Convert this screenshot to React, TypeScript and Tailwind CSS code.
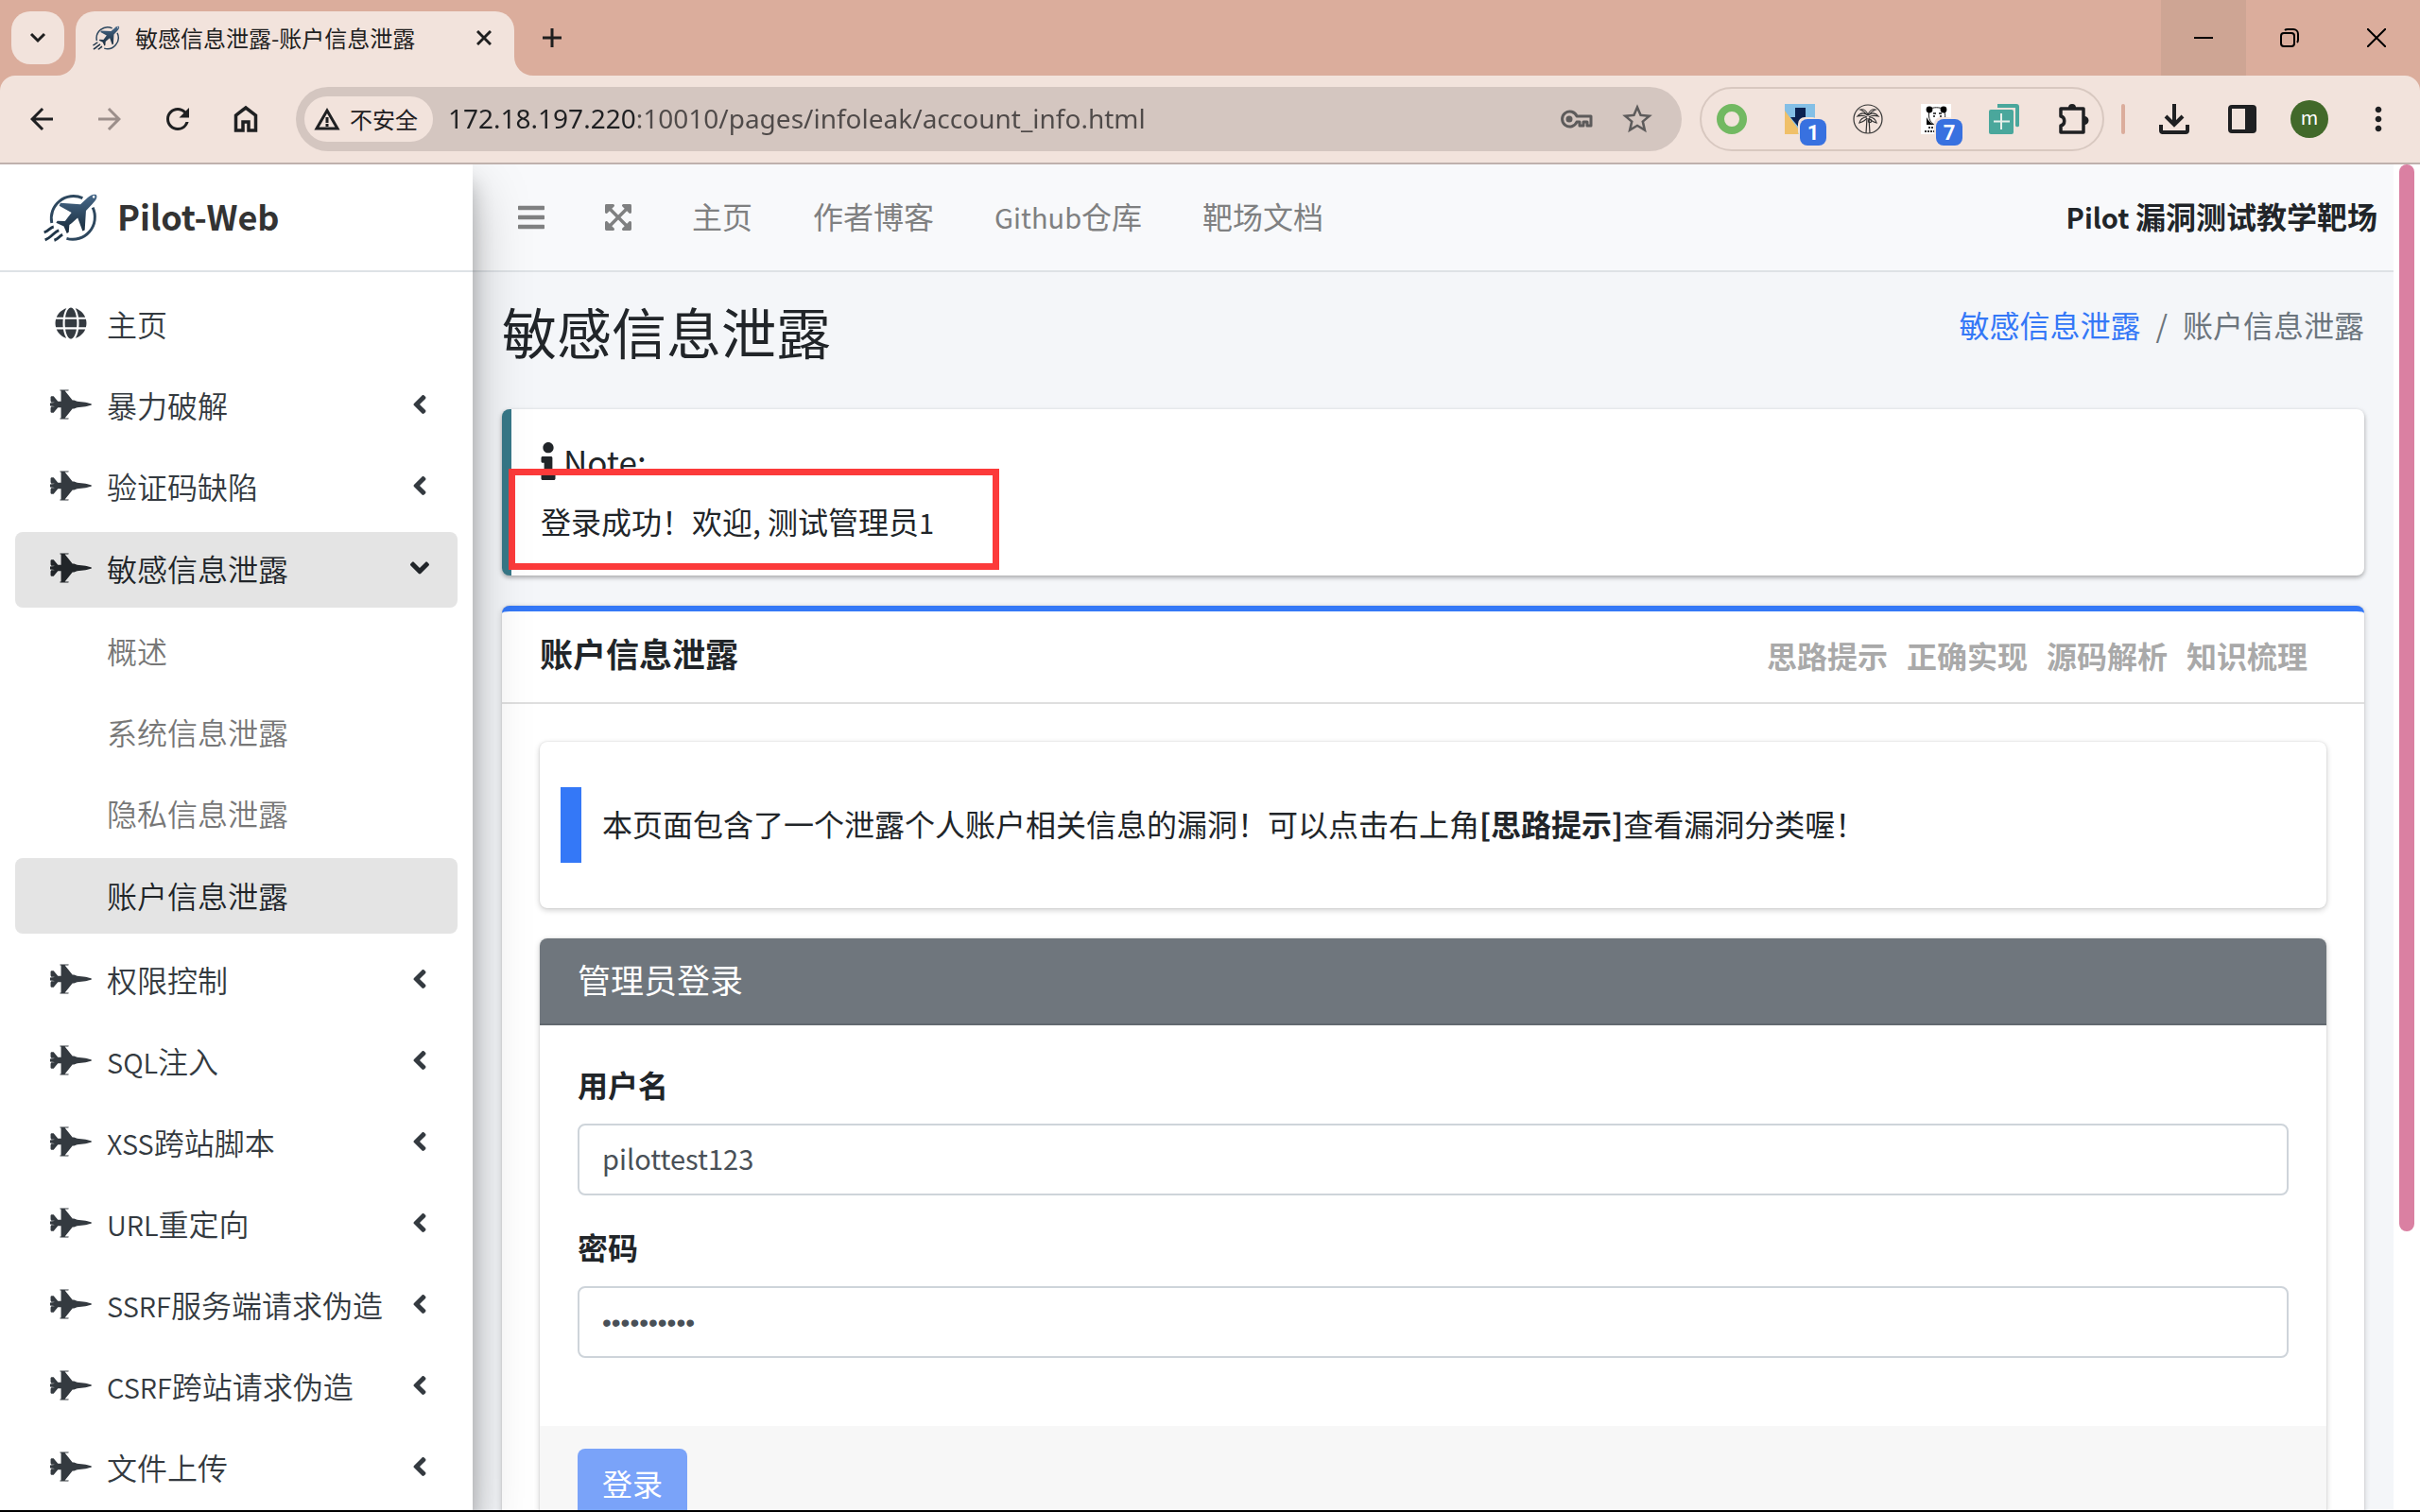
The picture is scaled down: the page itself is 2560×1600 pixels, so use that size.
import type { ReactNode } from "react";
import {
  FaAngleDown,
  FaAngleLeft,
  FaBars,
  FaExpandArrowsAlt,
  FaFighterJet,
  FaGlobe,
  FaInfo,
} from "react-icons/fa";
import { MdArrowBack, MdArrowForward, MdMoreVert, MdRefresh, MdStarBorder } from "react-icons/md";

type MenuEntry = { latin?: string; label: string };

const menuTop: MenuEntry[] = [{ label: "暴力破解" }, { label: "验证码缺陷" }];
const subMenu = ["概述", "系统信息泄露", "隐私信息泄露", "账户信息泄露"];
const menuBottom: MenuEntry[] = [
  { label: "权限控制" },
  { latin: "SQL", label: "注入" },
  { latin: "XSS", label: "跨站脚本" },
  { latin: "URL", label: "重定向" },
  { latin: "SSRF", label: "服务端请求伪造" },
  { latin: "CSRF", label: "跨站请求伪造" },
  { label: "文件上传" },
];
const navLinks: MenuEntry[] = [
  { label: "主页" },
  { label: "作者博客" },
  { latin: "Github", label: "仓库" },
  { label: "靶场文档" },
];
const cardTools = ["思路提示", "正确实现", "源码解析", "知识梳理"];

// Latin letters run one step smaller than the Chinese text beside them
function Latin({ children }: { children: ReactNode }) {
  return <span className="text-[29px]">{children}</span>;
}

function PilotLogo({ className }: { className: string }) {
  return (
    <svg viewBox="27 35 178 157" className={className} aria-hidden="true">
      <defs>
        <linearGradient id="pilot" x1="0" y1="0" x2="0" y2="1">
          <stop offset="0" stopColor="#47698a" />
          <stop offset="1" stopColor="#182a3a" />
        </linearGradient>
      </defs>
      <g fill="none" stroke="#2d475e" strokeWidth="9">
        <path d="M154 51 A72 72 0 0 0 54 132" />
        <path d="M187 82 A72 72 0 0 1 102 182" />
      </g>
      <path
        fill="url(#pilot)"
        fillRule="evenodd"
        d="M198 40C190 36 178 42 170 50L147 71L82 67L78 76L118 98C110 108 103 118 97 126L72 125L68 131L93 143L103 166L109 162L111 138C121 131 130 122 138 115L154 158L161 155L165 92L186 70C197 58 204 48 198 40ZM190 43a4 4 0 1 1 0 8a4 4 0 0 1 0-8Z"
      />
      <g fill="none" stroke="#203548" strokeWidth="9">
        <path d="M60 144C48 146 44 158 29 162" />
        <path d="M77 156C62 160 52 180 32 187" />
        <path d="M89 170C78 174 76 184 62 188" />
      </g>
    </svg>
  );
}

function BrowserTabs() {
  return (
    <div className="flex h-20 shrink-0 items-end bg-[#dbad9c]">
      <button aria-label="搜索标签页" className="mb-3 ml-3 flex h-14 w-14 items-center justify-center rounded-[20px] bg-[#f2e3dc]">
        <svg viewBox="0 0 18 12" className="h-3 w-4.5" fill="none" stroke="#1f1f1f" strokeWidth="3">
          <path d="M2 2l7 7 7-7" />
        </svg>
      </button>
      <div className="relative ml-3 flex h-17 w-[464px] items-center rounded-t-[20px] bg-[#f2e3dc] pr-5 pb-3 pl-[18px]">
        <svg viewBox="0 0 20 20" className="absolute bottom-0 -left-5 size-5" fill="#f2e3dc">
          <path d="M20 0v20H0A20 20 0 0 0 20 0z" />
        </svg>
        <svg viewBox="0 0 20 20" className="absolute -right-5 bottom-0 size-5" fill="#f2e3dc">
          <path d="M0 0v20h20A20 20 0 0 1 0 0z" />
        </svg>
        <PilotLogo className="h-7 w-[29px]" />
        <span className="ml-4 grow text-2xl text-[#1f1f1f]">敏感信息泄露-账户信息泄露</span>
        <button aria-label="关闭标签页" className="flex size-6 items-center justify-center">
          <svg viewBox="0 0 16 16" className="size-4" stroke="#1f1f1f" strokeWidth="3">
            <path d="M1 1l14 14M15 1L1 15" />
          </svg>
        </button>
      </div>
      <button aria-label="新标签页" className="mb-[30px] ml-[30px]">
        <svg viewBox="0 0 20 20" className="size-5" stroke="#1f1f1f" strokeWidth="3">
          <path d="M10 0v20M0 10h20" />
        </svg>
      </button>
      <div className="ml-auto flex h-full">
        <button aria-label="最小化" className="flex w-[90px] items-center justify-center bg-[#cea594]">
          <svg viewBox="0 0 20 20" className="size-5" stroke="#000" strokeWidth="2">
            <path d="M0 10h20" />
          </svg>
        </button>
        <button aria-label="还原" className="flex w-[92px] items-center justify-center">
          <svg viewBox="0 0 20 20" className="size-5" fill="none" stroke="#000" strokeWidth="2">
            <rect x="1" y="5" width="14" height="14" rx="3" />
            <path d="M5 2c1-1 2-1 3-1h6a5 5 0 0 1 5 5v6c0 1 0 2-1 3" />
          </svg>
        </button>
        <button aria-label="关闭" className="flex w-[92px] items-center justify-center">
          <svg viewBox="0 0 20 20" className="size-5" stroke="#000" strokeWidth="2">
            <path d="M0 0l20 20M20 0L0 20" />
          </svg>
        </button>
      </div>
    </div>
  );
}

function Badge({ children }: { children: ReactNode }) {
  return (
    <span className="absolute top-4 left-4 flex size-7 items-center justify-center rounded-lg bg-[#3871e0] font-[Roboto] text-[22px] font-bold text-white">
      {children}
    </span>
  );
}

function Extensions() {
  return (
    <div className="ml-[19px] flex h-17 items-center gap-10 rounded-full border-2 border-[#d8c8c0] pr-3.5 pl-4">
      <button aria-label="扩展 1">
        <svg viewBox="0 0 32 32" className="size-8" fill="none" stroke="#72b962" strokeWidth="8">
          <circle cx="16" cy="16" r="12" />
        </svg>
      </button>
      <button aria-label="扩展 2" className="relative">
        <svg viewBox="0 0 32 32" className="size-8">
          <path fill="#84bfe6" d="M0 0h32v32H0z" />
          <path fill="#8fc98d" d="M12 26h8v6h-8z" />
          <path fill="#f0c069" d="M0 7l14 19v6H0z" />
          <path fill="#0b2150" d="M11 4h11v10h5L16 26 6 14h5z" />
          <rect x="14" y="14" width="22" height="22" rx="7" fill="#f2e3dc" />
        </svg>
        <Badge>1</Badge>
      </button>
      <button aria-label="扩展 3">
        <svg viewBox="0 0 32 32" className="size-8" fill="none" stroke="#333" strokeWidth="1.2">
          <circle cx="16" cy="16" r="15" />
          <path d="M14 31l1-16M18 31l-1-16" />
          <path d="M16 12C12 9 8 9 5 13c4-1 7-1 10 1M16 12c4-3 8-3 11 1-4-1-7-1-10 1M16 12C15 8 12 5 8 6c3 1 5 3 7 6M16 12c1-4 4-7 8-6-3 1-5 3-7 6M15 14c-4 0-7 2-8 6 3-1 6-2 8-5M17 14c4 0 7 2 8 6-3-1-6-2-8-5" />
          <circle cx="18" cy="18" r="1.6" />
        </svg>
      </button>
      <button aria-label="扩展 4" className="relative">
        <svg viewBox="0 0 32 32" className="size-8">
          <path fill="#fff" d="M0 0h32v32H0z" />
          <path fill="#fff" stroke="#222" d="M9 6c3-3 12-3 15 0 3 5 2 14-3 16-4 1-9 0-11-4-2-3-2-9-1-12z" />
          <circle cx="9" cy="6" r="3.4" />
          <circle cx="24" cy="6" r="3.4" />
          <path d="M6 14c2 4 4 6 8 8H6z" />
          <path stroke="#111" strokeWidth="1.5" d="M13 10h3M19 10h3M13 13h2M20 13h2" />
          <path stroke="#333" strokeWidth="2" strokeDasharray="2 1" d="M8 25h10M4 29h14" />
          <rect x="14" y="14" width="22" height="22" rx="7" fill="#f2e3dc" />
        </svg>
        <Badge>7</Badge>
      </button>
      <button aria-label="扩展 5">
        <svg viewBox="0 0 32 32" className="size-8" fill="#4aa79c">
          <path d="M9 0h20a3 3 0 0 1 3 3v18a2 2 0 0 1-4 2V4H9z" />
          <rect y="6" width="26" height="26" rx="2" />
          <path stroke="#e7efe9" strokeWidth="2" d="M13 10v17M5 18.500h17" />
        </svg>
      </button>
      <button aria-label="扩展程序">
        <svg viewBox="0 0 34 34" className="size-[34px]" fill="#1f2022">
          <path
            fill="none"
            stroke="#1f2022"
            strokeWidth="3.5"
            strokeLinejoin="round"
            d="M4 6h24v25H4v-7c5-1 5-9 0-10z"
          />
          <path d="M12 5a4 4 0 0 1 8 0zM29 14a4 4 0 0 1 0 9z" />
        </svg>
      </button>
    </div>
  );
}

function AddressBar() {
  return (
    <div className="h-[94px] shrink-0 bg-[#dbad9c]">
      <div className="flex h-full items-center rounded-t-2xl border-b-2 border-[#bfb1ad] bg-[#f2e3dc] pr-6 pl-[26px] text-[#1f2022]">
        <button aria-label="后退">
          <MdArrowBack className="size-9" />
        </button>
        <button aria-label="前进" className="ml-9 text-[#9c8f8b]">
          <MdArrowForward className="size-9" />
        </button>
        <button aria-label="重新加载" className="ml-9">
          <MdRefresh className="size-9" />
        </button>
        <button aria-label="主页" className="ml-[41px]">
          <svg viewBox="0 0 26 30" className="h-[30px] w-[26px]" fill="none" stroke="#1f2022" strokeWidth="3.5">
            <path d="M2.500 27V11L13 3l10.500 8v16H16v-9h-6v9z" />
          </svg>
        </button>
        <div className="ml-10 flex h-17 grow items-center rounded-full bg-[#d4c6c0] pr-7 pl-[9px]">
          <button className="flex h-12 shrink-0 items-center rounded-full bg-[#f2e3dc] pr-4 pl-2.5 text-2xl">
            <svg viewBox="0 0 28 24" className="mr-2.5 h-6 w-7" fill="none" stroke="#1f2022" strokeWidth="3">
              <path d="M3 22L14 3l11 19z" />
              <path d="M14 10v6M14 17v3" />
            </svg>
            不安全
          </button>
          {/* host part dark, path part muted */}
          <input
            aria-label="地址和搜索栏"
            defaultValue="172.18.197.220:10010/pages/infoleak/account_info.html"
            className="ml-4 min-w-0 grow bg-[linear-gradient(90deg,#1f2022_200px,#4f4a49_200px)] bg-clip-text pb-0.5 font-['Noto_Sans',sans-serif] text-[28px] text-transparent outline-none"
          />
          <button aria-label="管理密码">
            <svg viewBox="0 0 38 22" className="h-[22px] w-[38px]" fill="none" stroke="#5d5b5b" strokeWidth="3">
              <path d="M19 8h15v10h-4v-4h-4v4h-4v-4h-3a8 8 0 1 1 0-6z" strokeLinejoin="round" />
              <circle cx="11" cy="11" r="2" fill="#5d5b5b" />
            </svg>
          </button>
          <button aria-label="为此标签页添加书签" className="ml-[26px]">
            <MdStarBorder className="size-[38px] text-[#5d5b5b]" />
          </button>
        </div>
        <Extensions />
        <div className="ml-[18px] h-8 w-1 rounded-full bg-[#dbad9c]" />
        <button aria-label="下载内容" className="ml-9">
          <svg viewBox="0 0 32 32" className="size-8" fill="none" stroke="#1f2022" strokeWidth="4">
            <path d="M16 0v20M7 13l9 9 9-9" />
            <path d="M2 22v6a2 2 0 0 0 2 2h24a2 2 0 0 0 2-2v-6" />
          </svg>
        </button>
        <button aria-label="侧边栏" className="ml-[41px]">
          <svg viewBox="0 0 30 30" className="size-[30px]">
            <rect x="2" y="2" width="26" height="26" rx="2" fill="none" stroke="#1f2022" strokeWidth="4" />
            <path fill="#1f2022" d="M18 2h10v26H18z" />
          </svg>
        </button>
        <button aria-label="个人资料" className="ml-9 size-10 rounded-full bg-[#42692a] pb-1 text-xl text-white">
          m
        </button>
        <button aria-label="菜单" className="ml-[33px]">
          <MdMoreVert className="size-10" />
        </button>
      </div>
    </div>
  );
}

function MenuItem({ latin, label }: MenuEntry) {
  return (
    <a href="#" className="flex h-20 items-center rounded-lg pr-6 pb-1 pl-[37px]">
      <FaFighterJet className="h-9 w-11" />
      <span className="ml-4 grow whitespace-nowrap">
        {latin && <Latin>{latin}</Latin>}
        {label}
      </span>
      <FaAngleLeft className="size-8" />
    </a>
  );
}

function Sidebar() {
  return (
    <aside className="relative z-10 w-[500px] shrink-0 bg-white font-[350] shadow-[0_28px_56px_rgba(0,0,0,0.25),0_20px_20px_rgba(0,0,0,0.22)]">
      <a href="#" className="flex h-[114px] items-center border-b-2 border-[#dee2e6] pl-[46px]">
        <PilotLogo className="h-[52px] w-[58px]" />
        <span className="ml-5 pb-1 text-4xl font-bold text-[#333]">Pilot-Web</span>
      </a>
      <nav className="flex flex-col gap-1.5 px-4 pt-4 text-[32px] text-[#343a40]">
        <a href="#" className="flex h-20 items-center pb-1 pl-[42px]">
          <FaGlobe className="size-[34px]" />
          <span className="ml-[21px]">主页</span>
        </a>
        {menuTop.map((item) => (
          <MenuItem key={item.label} {...item} />
        ))}
        <div className="flex flex-col gap-1.5 pt-px pb-1 text-[#777]">
          <a href="#" className="flex h-20 items-center rounded-lg bg-[#e4e4e4] pr-6 pb-1 pl-[37px] text-[#212529]">
            <FaFighterJet className="h-9 w-11" />
            <span className="ml-4 grow">敏感信息泄露</span>
            <FaAngleDown className="size-8" />
          </a>
          {subMenu.map((label) => (
            <a
              key={label}
              href="#"
              className={
                label === "账户信息泄露"
                  ? "mt-px flex h-20 items-center rounded-lg bg-[#e4e4e4] pb-0.5 pl-[97px] text-[#212529]"
                  : "flex h-20 items-center pb-0.5 pl-[97px]"
              }
            >
              {label}
            </a>
          ))}
        </div>
        {menuBottom.map((item) => (
          <MenuItem key={item.label} {...item} />
        ))}
      </nav>
    </aside>
  );
}

function Header() {
  return (
    <header className="flex h-[114px] shrink-0 items-center border-b-2 border-[#dee2e6] bg-[#f8f9fb] pr-[17px] pl-12 text-[32px] text-[#7f8081]">
      <button aria-label="切换菜单">
        <FaBars className="h-8 w-7" />
      </button>
      <button aria-label="全屏" className="ml-16">
        <FaExpandArrowsAlt className="h-8 w-7" />
      </button>
      <nav className="ml-16 flex gap-16 pb-1">
        {navLinks.map(({ latin, label }) => (
          <a key={label} href="#">
            {latin && <Latin>{latin}</Latin>}
            {label}
          </a>
        ))}
      </nav>
      <span className="ml-auto pb-1 font-bold text-[#212529]">
        <Latin>Pilot </Latin>漏洞测试教学靶场
      </span>
    </header>
  );
}

function LoginCard() {
  return (
    <form className="mt-8 rounded-lg shadow-[0_0_2px_rgba(0,0,0,0.13),0_2px_6px_rgba(0,0,0,0.2)]">
      <h3 className="flex h-[92px] items-center rounded-t-lg border-b-2 border-[#62696f] bg-[#6f767d] px-10 pb-1 text-[35px] text-white">
        管理员登录
      </h3>
      <div className="px-10 pt-10 pb-[72px]">
        <label htmlFor="username" className="block pb-1 leading-11 font-bold">
          用户名
        </label>
        <input
          id="username"
          defaultValue="pilottest123"
          className="mt-4 block h-19 w-full rounded-lg border-2 border-[#ced4da] px-6 pb-1 text-[29px] text-[#495057]"
        />
        <label htmlFor="password" className="mt-8 block pb-1 leading-11 font-bold">
          密码
        </label>
        <input
          id="password"
          type="password"
          defaultValue="pilot12345"
          className="mt-4 block h-19 w-full rounded-lg border-2 border-[#ced4da] px-6 pt-0.5 font-['Liberation_Sans',sans-serif] text-[28px] text-[#495057]"
        />
      </div>
      <div className="rounded-b-lg bg-[#f7f7f7] px-10 py-6">
        <button type="button" className="h-19 rounded-lg bg-[#7aa3f9] px-[26px] pb-1 text-white">
          登录
        </button>
      </div>
    </form>
  );
}

function Content() {
  return (
    <main className="grow overflow-hidden px-[31px] text-[32px] text-[#212529]">
      <div className="flex items-start justify-between pt-[27px]">
        <h1 className="text-[58px] leading-[70px]">敏感信息泄露</h1>
        <div className="flex pt-1 leading-12">
          <a href="#" className="text-[#3478f7]">
            敏感信息泄露
          </a>
          <span className="px-4 text-[#6c757d]">/</span>
          <span className="text-[#6c757d]">账户信息泄露</span>
        </div>
      </div>

      <section className="relative mt-12 h-44 rounded-lg border-l-10 border-[#377888] bg-white px-[31px] pt-[31px] shadow-[0_2px_6px_rgba(0,0,0,0.12),0_2px_4px_rgba(0,0,0,0.24)]">
        <h5 className="flex items-center leading-12">
          <FaInfo className="h-10 w-4" />
          <span className="ml-2 text-[35px]">Note:</span>
        </h5>
        <p className="mt-[15px] leading-12">
          登录成功！欢迎, 测试管理员<Latin>1</Latin>
        </p>
        <div className="absolute top-[63px] -left-[3px] h-[107px] w-[519px] border-7 border-[#fc3a3a]" />
      </section>

      <section className="mt-8 rounded-t-lg border-t-6 border-[#3478f7] bg-white shadow-[0_0_2px_rgba(0,0,0,0.13),0_2px_6px_rgba(0,0,0,0.2)]">
        <div className="flex h-[98px] items-center justify-between border-b-2 border-[#dfdfdf] pr-15 pl-10">
          <h3 className="pb-2 text-[35px] font-bold">账户信息泄露</h3>
          <div className="flex gap-5 pb-1 font-bold text-[#a9a9a9]">
            {cardTools.map((label) => (
              <a key={label} href="#">
                {label}
              </a>
            ))}
          </div>
        </div>
        <div className="px-10 pt-10">
          <div className="rounded-lg px-[22px] py-12 shadow-[0_0_2px_rgba(0,0,0,0.13),0_2px_6px_rgba(0,0,0,0.2)]">
            <p className="border-l-22 border-[#3478f7] pb-1 pl-[22px] leading-19">
              本页面包含了一个泄露个人账户相关信息的漏洞！可以点击右上角<b>[思路提示]</b>查看漏洞分类喔！
            </p>
          </div>
          <LoginCard />
        </div>
      </section>
    </main>
  );
}

export default function App() {
  return (
    <div
      lang="zh-CN"
      className="flex h-screen flex-col overflow-hidden border-b-2 border-black bg-white font-['Noto_Sans_CJK_SC',sans-serif]"
    >
      <BrowserTabs />
      <AddressBar />
      <div className="flex min-h-0 grow overflow-hidden">
        <Sidebar />
        <div className="flex min-w-0 grow flex-col bg-[#f4f6f9]">
          <Header />
          <Content />
        </div>
        <div className="w-7 shrink-0 bg-white px-1.5">
          <div className="h-[calc(100%-295px)] w-4 rounded-full bg-[#da80a2]" />
        </div>
      </div>
    </div>
  );
}
